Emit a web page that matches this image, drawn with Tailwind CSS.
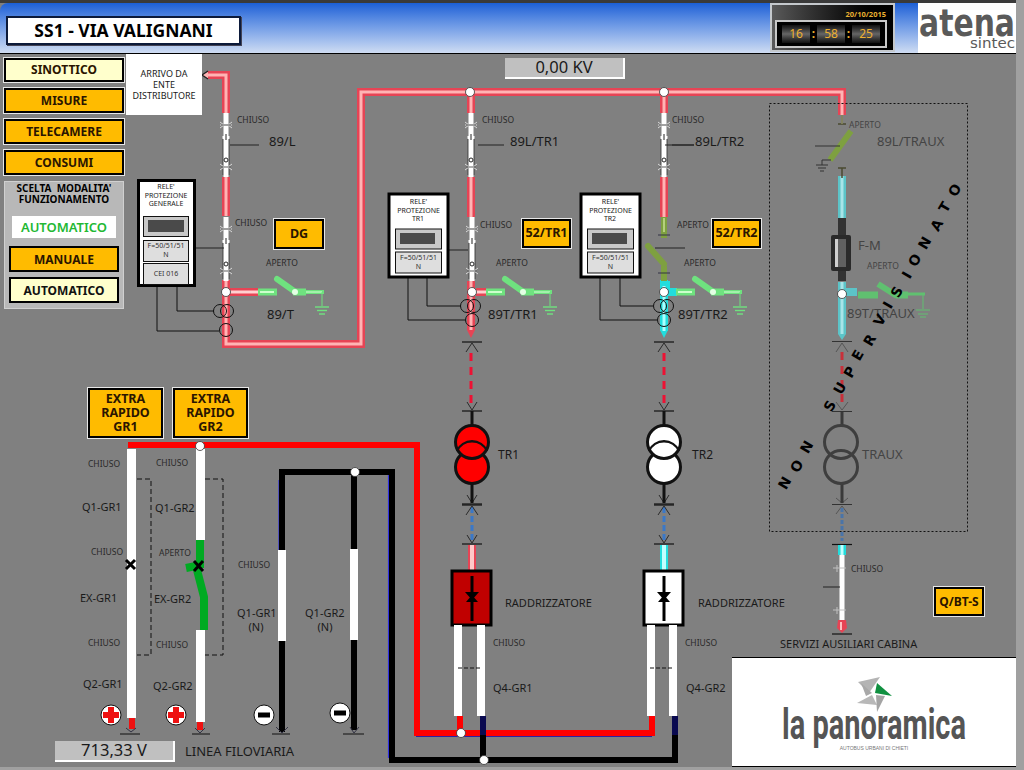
<!DOCTYPE html>
<html>
<head>
<meta charset="utf-8">
<script src="https://cdn.jsdelivr.net/npm/@tailwindcss/browser@4"></script>
</head>
<body class="m-0 bg-[#808080]">
<div class="relative w-[1024px] h-[770px] overflow-hidden bg-[#808080] font-['Noto_Sans',sans-serif] text-[#1a1a1a]">
  <!-- header -->
  <header class="relative flex items-center justify-between h-[51px] w-[1016px] mt-[3px] pl-[6px] rounded-tl-lg border-b border-black bg-linear-to-b from-[#1b5fd6] to-[#cfdcf2]">
    <div class="flex items-center justify-center w-[235px] h-[29px] mt-[5px] bg-white border-2 border-[#0c1a3a] font-bold text-[17.500px] text-black shadow-[1px_1px_0_#445]">SS1 - VIA VALIGNANI</div>
    <div class="flex items-stretch h-full">
      <div class="relative w-[125px] h-[49px] border-2 border-[#c4c8cc] bg-linear-to-r from-[#5a5a5a] to-black">
        <div class="absolute right-[7px] top-[3px] text-[7.500px] leading-[12px] font-bold text-[#e8b030]">20/10/2015</div>
        <div class="absolute left-[3px] top-[15px] w-[112px] h-[28px] border-2 border-[#c8c8c8] bg-black flex items-center justify-between px-[5px] text-[#eeb030] text-[12px]">
          <span class="w-[28px] h-[18px] flex items-center justify-center bg-linear-to-b from-[#111] via-[#666] to-[#111]">16</span><span class="font-bold">:</span>
          <span class="w-[28px] h-[18px] flex items-center justify-center bg-linear-to-b from-[#111] via-[#666] to-[#111]">58</span><span class="font-bold">:</span>
          <span class="w-[28px] h-[18px] flex items-center justify-center bg-linear-to-b from-[#111] via-[#666] to-[#111]">25</span>
        </div>
      </div>
      <div class="w-[23px]"></div>
      <div class="w-[98px] h-[50px] bg-white"></div>
    </div>
  </header>

  <!-- diagram canvas -->
  <svg class="absolute left-0 top-0" width="1024" height="770" viewBox="0 0 1024 770" font-family="'Noto Sans',sans-serif">
    <defs>
      <g id="sw">
        <rect x="-2.5" y="0" width="5" height="64" fill="#fff"/>
        <path d="M-3.2 25V62M3.2 25V62" stroke="#333" stroke-width=".6" fill="none"/>
        <path d="M-6 9Q0 15 6 9M-6 15Q0 9 6 15M-6 12H6" stroke="#d8d8d8" stroke-width="1" fill="none"/>
        <path d="M-5 12H5" stroke="#333" stroke-width=".7"/>
        <rect x="-3.5" y="23" width="7" height="3" fill="#fff"/><path d="M0 21V27" stroke="#222" stroke-width="1"/>
        <circle cx="0" cy="47" r="2" fill="#fff" stroke="#222" stroke-width="1"/>
        <path d="M-6 51Q0 57 6 51M-6 57Q0 51 6 57" stroke="#d8d8d8" stroke-width="1" fill="none"/>
        <path d="M-5 54H5" stroke="#555" stroke-width=".7"/>
      </g>
      <g id="node"><circle r="4.5" fill="#fff" stroke="#333" stroke-width=".8"/></g>
      <g id="cap"><path d="M-10 0H10" stroke="#1a1a1a" stroke-width="1.3"/><path d="M-6 10L0 1L6 10" fill="none" stroke="#2a2a2a" stroke-width="1"/></g>
      <g id="cup"><path d="M-10 0H10" stroke="#1a1a1a" stroke-width="1.3"/><path d="M-5 -9L0 -1L5 -9" fill="none" stroke="#2a2a2a" stroke-width="1"/></g>
      <g id="gnd" fill="none" stroke="#6fe27f">
        <path d="M0 0V14" stroke-width="1"/><path d="M-7 15H7" stroke-width="1.4"/><path d="M-5 18.5H5" stroke-width="1.4"/><path d="M-3 22H3" stroke-width="1.4"/>
      </g>
      <g id="gsw">
        <path d="M32 0H51" stroke="#6fe27f" stroke-width="7"/><path d="M34 0H48" stroke="#ccffcc" stroke-width="2"/>
        <path d="M51 -13L68 -1" stroke="#6fe27f" stroke-width="6" stroke-linecap="round"/>
        <path d="M67 0H80" stroke="#6fe27f" stroke-width="7"/><circle cx="69" cy="0" r="3" fill="#e4ffe4"/>
        <path d="M80 0H98" stroke="#6fe27f" stroke-width="4"/><path d="M80 0H96" stroke="#d8ffd8" stroke-width="1"/>
        <use href="#gnd" x="96" y="0"/>
      </g>
      <g id="chart">
        <rect x="0" y="0" width="59" height="83" fill="#fff" stroke="#000" stroke-width="3"/>
        <g font-size="7" fill="#222" text-anchor="middle"><text x="29.5" y="10">RELE'</text><text x="29.5" y="18.500">PROTEZIONE</text></g>
        <rect x="6.5" y="35" width="46" height="20" fill="#c8c8c8" stroke="#111" stroke-width="1"/>
        <rect x="11" y="39" width="35" height="11" fill="#4a4a4a"/>
        <rect x="6.5" y="58" width="46" height="21" fill="#dedede" stroke="#111" stroke-width="1"/>
        <g font-size="7" fill="#333" text-anchor="middle"><text x="29.5" y="66">F=50/51/51</text><text x="29.5" y="75">N</text></g>
      </g>
      <g id="diode" fill="#000">
        <path d="M0 6V51" stroke="#000" stroke-width="3"/>
        <path d="M-7 22H7L0 30Z"/><path d="M-6 32H6L0 25Z"/>
      </g>
    </defs>

    <!-- HV energised wires -->
    <g fill="none" stroke-linejoin="miter">
      <path d="M226 113V75H207M226 177V216M226 280V344H361V92H842V115M471 92V113M471 177V217M471 281V330M664 92V113M664 177V217" stroke="#e64455" stroke-width="8"/>
      <path d="M226 113V75H207M226 177V216M226 280V344H361V92H842V115M471 96V113M471 177V217M471 281V330M664 96V113M664 177V217" stroke="#ffb4b4" stroke-width="3"/>
      <path d="M230 292H258M476 292H486" stroke="#e64455" stroke-width="8"/>
      <path d="M230 292H258M476 292H486" stroke="#ffd0d0" stroke-width="3"/>
    </g>
    <path d="M208 71L202 75L208 79" fill="#ffb4b4" stroke="#222" stroke-width="1.4"/>
    <path d="M467 330H475L471 338Z" fill="#e64455"/>
    <path d="M660 330H668L664 338Z" fill="#22dddd"/>

    <use href="#sw" x="226" y="113"/><use href="#sw" x="226" y="217"/>
    <use href="#sw" x="471" y="113"/><use href="#sw" x="472" y="217"/>
    <use href="#sw" x="664" y="113"/>
    <!-- cyan / olive parts -->
    <g fill="none">
      <path d="M664 280V331M660 285H670" stroke="#22dddd" stroke-width="8"/>
      <path d="M664 286V331" stroke="#aaffff" stroke-width="3"/>
      <path d="M664 292H677" stroke="#22dddd" stroke-width="8"/>
      <path d="M664 217V238" stroke="#7ea040" stroke-width="6"/>
      <path d="M664 218V232" stroke="#c8e090" stroke-width="1.5"/>
      <path d="M648 246L664 264" stroke="#7ea040" stroke-width="6" stroke-linecap="round"/>
      <path d="M664 266V281" stroke="#7ea040" stroke-width="6"/>
      <path d="M655 248H685M665 145H694M478 145H504M672 145H694M230 145H259" stroke="#222" stroke-width="1"/>
      <path d="M196 248H224M447 250H468" stroke="#222" stroke-width="1"/>
      <path d="M658 235H670M658 273H670" stroke="#334" stroke-width="1"/>
    </g>
    <use href="#node" x="470" y="92"/><use href="#node" x="664" y="92"/>
    <use href="#gsw" x="226" y="292"/><use href="#gsw" x="454" y="292"/><use href="#gsw" x="644" y="292"/>
    <use href="#node" x="226" y="292"/><use href="#node" x="472" y="292"/><use href="#node" x="664" y="292"/>

    <!-- CT & relay wires -->
    <g fill="none" stroke="#111" stroke-width="1">
      <path d="M157 287V331H219M177 287V311H214"/>
      <path d="M408 276V320H465M427 276V306H461"/>
      <path d="M600 276V320H657M620 276V306H653"/>
      <circle cx="220" cy="311" r="6.5"/><circle cx="227" cy="311" r="6.5"/><circle cx="226" cy="330" r="6.5"/>
      <circle cx="467" cy="306" r="6.5"/><circle cx="474" cy="306" r="6.5"/><circle cx="472" cy="320" r="6.5"/>
      <circle cx="660" cy="306" r="6.5"/><circle cx="667" cy="306" r="6.5"/><circle cx="664" cy="320" r="6.5"/>
    </g>

    <!-- relays -->
    <rect x="138.5" y="180.5" width="56" height="105" fill="#fff" stroke="#000" stroke-width="3"/>
    <g font-size="7" fill="#222" text-anchor="middle"><text x="166" y="189">RELE'</text><text x="166" y="198">PROTEZIONE</text><text x="166" y="206">GENERALE</text></g>
    <rect x="143.500" y="216.500" width="45" height="20" fill="#c8c8c8" stroke="#111"/><rect x="148" y="220" width="36" height="12" fill="#4a4a4a"/>
    <rect x="143.500" y="240.500" width="45" height="21" fill="#dedede" stroke="#111"/>
    <rect x="143.500" y="263.500" width="45" height="21" fill="#dedede" stroke="#111"/>
    <g font-size="7" fill="#333" text-anchor="middle"><text x="166" y="248">F=50/51/51</text><text x="166" y="257">N</text><text x="166" y="276">CEI 016</text></g>
    <use href="#chart" x="389" y="194"/>
    <text x="418" y="221" font-size="7" fill="#222" text-anchor="middle">TR1</text>
    <use href="#chart" x="581" y="194"/>
    <text x="610" y="221" font-size="7" fill="#222" text-anchor="middle">TR2</text>

    <!-- feeders down to transformers -->
    <g fill="none">
      <path d="M471 353V404M664 353V404" stroke="#ee1133" stroke-width="3" stroke-dasharray="8 6"/>
      <path d="M472 507V540M664 507V540" stroke="#3a78c8" stroke-width="3" stroke-dasharray="6 3"/>
      <path d="M472 545V570" stroke="#e64455" stroke-width="8"/><path d="M472 545V570" stroke="#ffc8c8" stroke-width="4"/>
      <path d="M664 545V570" stroke="#22dddd" stroke-width="8"/><path d="M664 545V570" stroke="#c0ffff" stroke-width="4"/>
    </g>
    <use href="#cap" x="472" y="342"/><use href="#cap" x="664" y="342"/>
    <use href="#cup" x="472" y="411"/><use href="#cup" x="664" y="411"/>
    <use href="#cup" x="472" y="504"/><use href="#cup" x="664" y="504"/>
    <use href="#cap" x="472" y="505"/><use href="#cap" x="664" y="505"/>
    <use href="#cup" x="472" y="544"/><use href="#cup" x="664" y="544"/>
    <path d="M472 411V426M472 484V503M664 411V426M664 484V503" stroke="#111" stroke-width="3"/>
    <circle cx="472" cy="467" r="16.500" fill="#ff0000" stroke="#111" stroke-width="3"/>
    <circle cx="472" cy="442" r="16.500" fill="#ff0000" stroke="#111" stroke-width="3"/>
    <path d="M457 451A16.500 16.500 0 0 1 487 451" fill="none" stroke="#111" stroke-width="2.500"/>
    <circle cx="664" cy="467" r="16.500" fill="#fff" stroke="#111" stroke-width="3"/>
    <circle cx="664" cy="442" r="16.500" fill="#fff" stroke="#111" stroke-width="3"/>
    <path d="M649 451A16.500 16.500 0 0 1 679 451" fill="none" stroke="#111" stroke-width="2.500"/>

    <!-- rectifiers -->
    <rect x="452" y="571" width="39" height="54" fill="#c00000" stroke="#000" stroke-width="3"/>
    <use href="#diode" x="472" y="570"/>
    <rect x="644" y="571" width="39" height="54" fill="#fff" stroke="#000" stroke-width="3"/>
    <use href="#diode" x="664" y="570"/>

    <!-- DC buses -->
    <g fill="none">
      <path d="M128 445H417V733H652V716" stroke="#ff0000" stroke-width="6"/>
      <path d="M416 736.500H652" stroke="#3020a0" stroke-width="1.200"/>
      <path d="M460 716V733" stroke="#ff0000" stroke-width="6"/>
      <path d="M388.500 472V758M279 480V550" stroke="#3030e0" stroke-width="1.200"/>
      <path d="M282 732V472H392V760H675V716" stroke="#000" stroke-width="6"/>
      <path d="M483 716V760" stroke="#000" stroke-width="6"/>
      <path d="M483 716V735M675 716V735" stroke="#0a0a50" stroke-width="6"/>
      <path d="M354 472V730" stroke="#000" stroke-width="6"/>
    </g>
    <!-- rectifier output legs -->
    <rect x="454" y="625" width="8" height="91" fill="#fff"/><rect x="477" y="625" width="8" height="91" fill="#fff"/>
    <rect x="647" y="625" width="8" height="91" fill="#fff"/><rect x="669" y="625" width="8" height="91" fill="#fff"/>
    <path d="M458 668H480M650 668H672" stroke="#111" stroke-width="1" stroke-dasharray="4 2"/>
    <use href="#node" x="461" y="733"/><use href="#node" x="484" y="760"/>

    <!-- traction poles -->
    <rect x="127" y="449" width="9" height="269" fill="#fff"/>
    <rect x="129" y="718" width="6" height="11" fill="#ee1111"/>
    <path d="M126 728L131 732L136 728" fill="none" stroke="#334" stroke-width="1"/>
    <path d="M120 734H140M192 734H210M272 734H290M343 734H364" stroke="#111" stroke-width="1.200"/>
    <rect x="196" y="449" width="9" height="91" fill="#fff"/>
    <rect x="196" y="540" width="8" height="28" fill="#00aa22"/>
    <path d="M186 568L196 566L204 597V630" fill="none" stroke="#00aa22" stroke-width="8" stroke-linejoin="bevel"/>
    <rect x="196" y="630" width="9" height="92" fill="#fff"/>
    <rect x="197" y="722" width="6" height="8" fill="#ee1111"/>
    <path d="M195 728L200 733L205 728" fill="none" stroke="#334" stroke-width="1"/>
    <path d="M276 727L282 733L288 727M350 727L354 733L359 727" fill="none" stroke="#334" stroke-width="1"/>
    <rect x="278" y="550" width="8" height="91" fill="#fff"/>
    <rect x="350" y="549" width="8" height="91" fill="#fff"/>
    <use href="#node" x="200" y="446"/><use href="#node" x="355" y="472"/>
    <path d="M126 560L135 569M135 560L126 569M194 561L203 571M203 561L194 571" stroke="#000" stroke-width="3"/>
    <g fill="none" stroke="#111" stroke-width="1" stroke-dasharray="5 3">
      <path d="M137 479H151V655H137M205 479H223V655H205"/>
    </g>
    <g>
      <circle cx="111" cy="715" r="10" fill="#fff" stroke="#111"/><path d="M111 707V723M103 715H119" stroke="#ee1111" stroke-width="6"/>
      <circle cx="176" cy="715" r="10" fill="#fff" stroke="#111"/><path d="M176 707V723M168 715H184" stroke="#ee1111" stroke-width="6"/>
      <circle cx="264" cy="715" r="10" fill="#fff" stroke="#111"/><path d="M258 715H270" stroke="#000" stroke-width="5"/>
      <circle cx="340" cy="713" r="10" fill="#fff" stroke="#111"/><path d="M334 713H346" stroke="#000" stroke-width="5"/>
    </g>

    <!-- non supervised area -->
    <rect x="769.500" y="103.500" width="198" height="428" fill="none" stroke="#111" stroke-width="1" stroke-dasharray="2 2"/>
    <g fill="none">
      <path d="M842 176V218M842 282V334" stroke="#5cc4c8" stroke-width="8"/>
      <path d="M842 176V218M842 282V334" stroke="#a8e4e8" stroke-width="3"/>
      <path d="M842 218V235M842 271V281" stroke="#333" stroke-width="8"/>
      <path d="M846 292H857" stroke="#5cc4c8" stroke-width="8"/><path d="M858 295H878" stroke="#60c070" stroke-width="7"/>
      <path d="M878 284L897 296" stroke="#60c070" stroke-width="6"/>
      <path d="M896 295H908" stroke="#60c070" stroke-width="7"/><path d="M908 294H925" stroke="#60c070" stroke-width="3"/>
      <path d="M923 295V309" stroke="#60c070"/><path d="M916 310H930M918 314H928M920 317H926" stroke="#60c070" stroke-width="1.200"/>
      <path d="M851 131L830 160" stroke="#7ea040" stroke-width="6"/>
      <path d="M815 146H840" stroke="#333" stroke-width="1"/>
      <path d="M842 115V124M838 124H846M842 178V168M838 168H846" stroke="#4a4a30" stroke-width="1.500"/>
      <path d="M842 115V124" stroke="#b0b080" stroke-width="1"/>
      <path d="M831 160H822V165M816 165H828M818 168H826M820 171H824" stroke="#333" stroke-width="1"/>
    </g>
    <rect x="831" y="235" width="20" height="36" rx="2" fill="#2a2a2a"/><rect x="836" y="239" width="10" height="28" fill="#606060"/><rect x="835" y="239" width="3" height="28" fill="#cfcfcf"/>
    <path d="M838 334H846L842 340Z" fill="#5cc4c8"/>
    <use href="#node" x="842" y="294"/>
    <path d="M842 352V404" stroke="#c8303a" stroke-width="3" stroke-dasharray="8 6"/>
    <path d="M832 341.500H852M832 411.500H852M832 504.500H852" stroke="#333" stroke-width="1.200"/>
    <path d="M836 352L842 343L848 352M836 402L842 410L848 402M836 498L842 503L848 498M836 514L842 506L848 514" fill="none" stroke="#555" stroke-width="1"/>
    <path d="M842 412V426M842 484V503" stroke="#3a3a3a" stroke-width="3"/>
    <circle cx="841" cy="467" r="16.500" fill="none" stroke="#3e3e3e" stroke-width="3"/><circle cx="841" cy="442" r="16.500" fill="none" stroke="#3e3e3e" stroke-width="3"/>
    <path d="M842 508V541" stroke="#4a74a8" stroke-width="3" stroke-dasharray="4 2"/>
    <path d="M832 544.500H852" stroke="#111" stroke-width="1.200"/>
    <path d="M842 545V555" stroke="#22dddd" stroke-width="8"/><path d="M842 545V555" stroke="#c0ffff" stroke-width="3"/>
    <rect x="839.500" y="555" width="5" height="65" fill="#fff"/>
    <path d="M833 568H846M833 610H846M837 565V572M837 607V614" stroke="#c0c0c0" stroke-width="1"/>
    <path d="M823 587H840" stroke="#222"/>
    <path d="M838 620H846L847 628L842 633L837 628Z" fill="#e64455"/><path d="M841 622V630" stroke="#ffc0c0" stroke-width="2"/>
    <path d="M832 634H852" stroke="#111" stroke-width="1.200"/>

    <!-- small labels -->
    <g font-size="8.500" fill="#2a2a2a">
      <text x="237" y="123">CHIUSO</text><text x="235" y="226">CHIUSO</text><text x="266" y="266">APERTO</text>
      <text x="482" y="123">CHIUSO</text><text x="480" y="228">CHIUSO</text><text x="496" y="266">APERTO</text>
      <text x="672" y="123">CHIUSO</text><text x="677" y="228">APERTO</text><text x="684" y="266">APERTO</text>
      <text x="88" y="467">CHIUSO</text><text x="156" y="466">CHIUSO</text><text x="91" y="555">CHIUSO</text><text x="159" y="556">APERTO</text>
      <text x="88" y="646">CHIUSO</text><text x="156" y="648">CHIUSO</text><text x="238" y="568">CHIUSO</text>
      <text x="493" y="646">CHIUSO</text><text x="685" y="646">CHIUSO</text><text x="851" y="572">CHIUSO</text>
    </g>
    <g font-size="8.500" fill="#444"><text x="849" y="128">APERTO</text><text x="867" y="269">APERTO</text></g>
    <!-- medium labels -->
    <g font-size="13" fill="#1a1a1a">
      <text x="269" y="146">89/L</text><text x="267" y="319">89/T</text>
      <text x="510" y="146">89L/TR1</text><text x="488" y="319">89T/TR1</text>
      <text x="695" y="146">89L/TR2</text><text x="678" y="319">89T/TR2</text>
    </g>
    <g font-size="13" fill="#444"><text x="877" y="146">89L/TRAUX</text><text x="858" y="250">F-M</text><text x="847" y="318">89T/TRAUX</text><text x="862" y="459">TRAUX</text></g>
    <g font-size="11" fill="#1a1a1a">
      <text x="82" y="511">Q1-GR1</text><text x="155" y="512">Q1-GR2</text><text x="80" y="602">EX-GR1</text><text x="154" y="603">EX-GR2</text>
      <text x="83" y="688">Q2-GR1</text><text x="153" y="690">Q2-GR2</text>
      <text x="237" y="617">Q1-GR1</text><text x="256" y="631" text-anchor="middle">(N)</text>
      <text x="305" y="617">Q1-GR2</text><text x="325" y="631" text-anchor="middle">(N)</text>
      <text x="493" y="692">Q4-GR1</text><text x="686" y="692">Q4-GR2</text>
      <text x="505" y="607">RADDRIZZATORE</text><text x="698" y="607">RADDRIZZATORE</text>
      <text x="780" y="648">SERVIZI AUSILIARI CABINA</text>
    </g>
    <g font-size="12" fill="#1a1a1a"><text x="498" y="459">TR1</text><text x="692" y="459">TR2</text></g>
    <text x="185" y="756" font-size="13" fill="#1a1a1a">LINEA FILOVIARIA</text>

    <!-- arched watermark -->
    <g font-family="'DejaVu Sans',sans-serif" font-weight="700" font-size="14" fill="#000" text-anchor="middle">
      <text transform="translate(789 485.500) rotate(-60)">N</text><text transform="translate(801 468.500) rotate(-60)">O</text><text transform="translate(811 449.500) rotate(-60)">N</text>
      <text transform="translate(834 408.500) rotate(-60)">S</text><text transform="translate(844 390.500) rotate(-60)">U</text><text transform="translate(854 374.500) rotate(-60)">P</text>
      <text transform="translate(862 357.500) rotate(-60)">E</text><text transform="translate(874 342.500) rotate(-60)">R</text><text transform="translate(884 322.500) rotate(-60)">V</text>
      <text transform="translate(892 307.500) rotate(-60)">I</text><text transform="translate(901 294.500) rotate(-60)">S</text><text transform="translate(911 277.500) rotate(-60)">I</text>
      <text transform="translate(919 262.500) rotate(-60)">O</text><text transform="translate(929 245.500) rotate(-60)">N</text><text transform="translate(941 227.500) rotate(-60)">A</text>
      <text transform="translate(949 209.500) rotate(-60)">T</text><text transform="translate(959 192.500) rotate(-60)">O</text>
    </g>

    <!-- atena logo -->
    <g fill="#5a5a5a">
      <text x="919" y="36" font-family="'DejaVu Sans',sans-serif" font-weight="700" font-size="37" textLength="96" lengthAdjust="spacingAndGlyphs">atena</text>
      <text x="970" y="48" font-family="'DejaVu Sans',sans-serif" font-size="14" textLength="45" lengthAdjust="spacingAndGlyphs">sintec</text>
    </g>
  </svg>

  <!-- left column -->
  <aside class="absolute left-[4px] top-[58px] flex flex-col gap-[6px] w-[120px] text-[12px] font-bold text-[#2a1500]">
    <div class="flex items-center justify-center h-[24px] border-2 border-black bg-[#ffffcc] outline outline-1 outline-[#e8e8e8]">SINOTTICO</div>
    <div class="flex items-center justify-center h-[25px] border-2 border-black bg-[#ffbb00] outline outline-1 outline-[#e8e8e8]">MISURE</div>
    <div class="flex items-center justify-center h-[25px] border-2 border-black bg-[#ffbb00] outline outline-1 outline-[#e8e8e8]">TELECAMERE</div>
    <div class="flex items-center justify-center h-[25px] border-2 border-black bg-[#ffbb00] outline outline-1 outline-[#e8e8e8]">CONSUMI</div>
    <div class="flex flex-col items-center h-[128px] pt-[1px] px-[4px] bg-[#b8b8b8] border border-[#d0d0d0] text-[10px] leading-[11px] text-black">
      <div class="text-center whitespace-nowrap">SCELTA&nbsp; MODALITA'<br>FUNZIONAMENTO</div>
      <div class="flex items-center justify-center shrink-0 w-[104px] h-[22px] mt-[11px] bg-white text-[13px] font-semibold text-[#22b833]">AUTOMATICO</div>
      <div class="flex items-center justify-center shrink-0 w-[110px] h-[26px] mt-[8px] border-2 border-black bg-[#ffbb00] text-[12px] text-[#2a1500]">MANUALE</div>
      <div class="flex items-center justify-center shrink-0 w-[110px] h-[26px] mt-[5px] border-2 border-black bg-[#ffffcc] text-[12px] text-[#111]">AUTOMATICO</div>
    </div>
  </aside>

  <!-- free-canvas widgets -->
  <div class="absolute left-[126px] top-[54px] w-[76px] h-[61px] flex items-center justify-center bg-white text-center text-[9px] leading-[11px] text-[#1a1a1a]">ARRIVO DA<br>ENTE<br>DISTRIBUTORE</div>
  <div class="absolute left-[505px] top-[58px] w-[120px] h-[21px] flex items-center justify-center bg-[#c0c0c0] border-r-2 border-b-2 border-white text-[16.500px] leading-none text-[#1a1a1a]">0,00 KV</div>
  <div class="absolute left-[55px] top-[741px] w-[120px] h-[21px] flex items-center justify-center bg-[#c0c0c0] border-r-2 border-b-2 border-white text-[16.500px] leading-none text-[#1a1a1a]">713,33 V</div>

  <div class="absolute left-[274px] top-[219px] w-[50px] h-[30px] flex items-center justify-center border-2 border-black bg-[#ffbb00] outline outline-1 outline-[#e8e8e8] text-[12.500px] font-bold text-[#2a1500]">DG</div>
  <div class="absolute left-[522px] top-[219px] w-[49px] h-[29px] flex items-center justify-center border-2 border-black bg-[#ffbb00] outline outline-1 outline-[#e8e8e8] text-[12.500px] font-bold text-[#2a1500]">52/TR1</div>
  <div class="absolute left-[712px] top-[219px] w-[49px] h-[29px] flex items-center justify-center border-2 border-black bg-[#ffbb00] outline outline-1 outline-[#e8e8e8] text-[12.500px] font-bold text-[#2a1500]">52/TR2</div>
  <div class="absolute left-[934px] top-[587px] w-[50px] h-[29px] flex items-center justify-center border-2 border-black bg-[#ffbb00] outline outline-1 outline-[#e8e8e8] text-[12px] font-bold text-[#2a1500]">Q/BT-S</div>
  <div class="absolute left-[88px] top-[388px] w-[75px] h-[50px] flex items-center justify-center text-center border-2 border-black bg-[#ffbb00] outline outline-1 outline-[#e8e8e8] text-[12.500px] leading-[14px] font-bold text-[#2a1500]">EXTRA<br>RAPIDO<br>GR1</div>
  <div class="absolute left-[173px] top-[388px] w-[75px] h-[50px] flex items-center justify-center text-center border-2 border-black bg-[#ffbb00] outline outline-1 outline-[#e8e8e8] text-[12.500px] leading-[14px] font-bold text-[#2a1500]">EXTRA<br>RAPIDO<br>GR2</div>

  <!-- sponsor logo -->
  <div class="absolute left-[732px] top-[657px] w-[284px] h-[110px] bg-white border-y border-black">
    <svg width="284" height="108" viewBox="0 0 284 108">
      <path d="M126 24L148 19L137 35Z" fill="#b4b4b4"/>
      <path d="M129 25L140 35L134 38Z" fill="#a8a8a8"/>
      <path d="M145 25L160 38L143 35Z" fill="#109040"/>
      <path d="M125 45L140 37L145 47Z" fill="#b8b8b8"/>
      <path d="M144 37L153 38L145 54Z" fill="#a4a4a4"/>
      <text x="50" y="81" font-family="'Roboto',sans-serif" font-weight="700" font-size="42" fill="#555" textLength="184" lengthAdjust="spacingAndGlyphs">la panoramica</text>
      <text x="142" y="92" font-family="'Liberation Sans',sans-serif" font-size="5" fill="#777" text-anchor="middle">AUTOBUS URBANI DI CHIETI</text>
    </svg>
  </div>

  <!-- window edge -->
  <div class="absolute right-0 top-0 w-[8px] h-full bg-[#a0a0a0]"></div>
  <div class="absolute left-0 bottom-0 w-full h-[3px] bg-[#a0a0a0]"></div>
  <div class="absolute left-0 top-0 w-[1016px] h-[3px] bg-[#3a3a3a]"></div>
</div>
</body>
</html>
